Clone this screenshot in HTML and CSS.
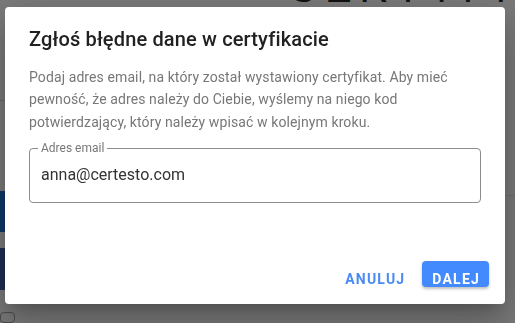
FILE: index.html
```html
<!DOCTYPE html>
<html lang="pl">
<head>
    <meta charset="UTF-8">
    <meta name="viewport" content="width=device-width, initial-scale=1.0">
    <title>Zgłoś błędne dane</title>
    <link rel="stylesheet" href="styles.css">
</head>
<body>
    <div class="page">
        <div class="sidebar">
            <div class="sideRule"></div>
            <div class="sideBlock blue"></div>
            <div class="sideBlock navy"></div>
            <div class="sideChip"></div>
        </div>
        <div class="divider"></div>
        <div class="cert">
            <div class="certTitle">CERTYFIKAT</div>
            <div class="certLine">zn</div>
            <div class="certName">k</div>
            <div class="certSign">ü</div>
            <div class="certRule"></div>
        </div>
    </div>

    <div class="backdrop">
        <div class="dialog">
            <h2 class="dialogTitle">Zgłoś błędne dane w certyfikacie</h2>
            <p class="dialogText">Podaj adres email, na który został wystawiony certyfikat. Aby mieć pewność, że adres należy do Ciebie, wyślemy na niego kod potwierdzający, który należy wpisać w kolejnym kroku.</p>
            <fieldset class="field">
                <legend>Adres email</legend>
                <input type="email" id="email" value="anna@certesto.com">
            </fieldset>
            <div class="actions">
                <button type="button" class="btnText">Anuluj</button>
                <button type="button" class="btnMain">Dalej</button>
            </div>
        </div>
    </div>
</body>
</html>
```

FILE: styles.css
```css
* {
    margin: 0;
    padding: 0;
    box-sizing: border-box;
}

body {
    font-family: Roboto, "Liberation Sans", sans-serif;
    background: #f4f4f4;
    height: 323px;
    overflow: hidden;
}

/* page behind the dialog */
.page {
    display: flex;
    height: 100%;
}

.sidebar {
    width: 257px;
    padding-top: 100px;
    display: flex;
    flex-direction: column;
}

.sideRule {
    height: 1px;
    background: #d0d0d0;
    margin-bottom: 90px;
}

.sideBlock {
    height: 44px;
    width: 240px;
}

.sideBlock.blue {
    background: #1a6fcc;
    margin-bottom: 16px;
}

.sideBlock.navy {
    background: #3b5ba5;
    margin-bottom: 22px;
}

.sideChip {
    width: 15px;
    height: 12px;
    border: 1px solid #999;
    border-radius: 4px;
}

.divider {
    width: 2px;
    background: #6b1f3a;
}

.cert {
    flex: 1;
    padding-left: 48px;
    color: #222;
}

.certTitle {
    font-family: "Liberation Sans", sans-serif;
    font-size: 40px;
    letter-spacing: 8px;
    line-height: 1;
    margin-top: -32px;
    white-space: nowrap;
}

.certLine {
    font-size: 13px;
    margin-top: 26px;
    padding-left: 198px;
}

.certName {
    font-size: 34px;
    color: #7a1f45;
    padding-left: 197px;
    line-height: 40px;
}

.certSign {
    font-family: "DejaVu Serif", serif;
    font-style: italic;
    font-size: 32px;
    color: #e8909e;
    padding-left: 197px;
}

.certRule {
    height: 1px;
    background: #ddd;
    margin-top: 68px;
}

/* dialog */
.backdrop {
    position: fixed;
    inset: 0;
    background: rgba(0, 0, 0, 0.5);
    padding: 7px 10px 0 5px;
}

.dialog {
    width: 500px;
    height: 297px;
    background: #fff;
    border-radius: 4px;
    box-shadow: 0 11px 15px -7px rgba(0, 0, 0, 0.2), 0 24px 38px 3px rgba(0, 0, 0, 0.14), 0 9px 46px 8px rgba(0, 0, 0, 0.12);
    padding: 17px 24px 0;
    display: flex;
    flex-direction: column;
}

.dialogTitle {
    font-size: 20px;
    font-weight: 500;
    color: #212121;
    letter-spacing: 0.15px;
    line-height: 30px;
    margin-bottom: 12px;
}

.dialogText {
    font-size: 14px;
    line-height: 22.4px;
    color: #777;
    letter-spacing: 0.1px;
    margin-bottom: 15px;
}

.field {
    border: 1px solid #8c8c8c;
    border-radius: 4px;
    height: 61px;
    padding: 0 11px;
    margin-top: -6px;
}

.field legend {
    font-size: 12px;
    color: #777;
    padding: 0 3px;
    margin-left: -3px;
    line-height: 12px;
}

.field input {
    border: none;
    outline: none;
    width: 100%;
    font-family: inherit;
    font-size: 16px;
    color: #333;
    padding: 11px 0 7px;
    background: transparent;
}

.actions {
    margin-top: auto;
    display: flex;
    justify-content: flex-end;
    align-items: flex-end;
    gap: 17px;
    padding-bottom: 17px;
    margin-right: -8px;
}

.btnText, .btnMain {
    font-family: inherit;
    font-size: 14px;
    font-weight: 700;
    letter-spacing: 1.2px;
    text-transform: uppercase;
    border: none;
    border-radius: 4px;
    height: 26px;
    line-height: 16px;
    padding-top: 9px;
    cursor: pointer;
}

.btnText {
    background: none;
    color: #4a8af4;
    padding-left: 0;
    padding-right: 0;
}

.btnMain {
    background: #448aff;
    color: #fff;
    padding-left: 10px;
    padding-right: 9px;
    box-shadow: 0 2px 3px rgba(0, 0, 0, 0.25);
}
```
